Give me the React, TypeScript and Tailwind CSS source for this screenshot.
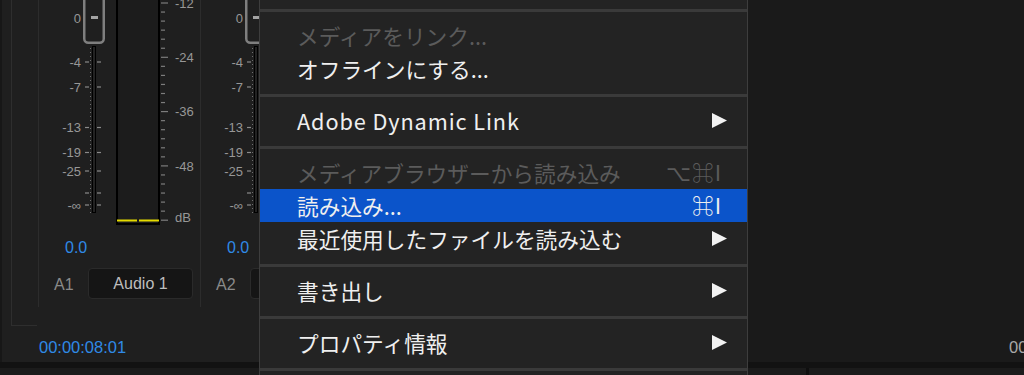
import React from "react";

const LABEL_FONT = "Liberation Sans, Arial, sans-serif";

function Meter({ partial }: { partial?: boolean }) {
  const left: [number, string][] = [
    [62, "-4"],
    [87, "-7"],
    [127.5, "-13"],
    [152.5, "-19"],
    [171, "-25"],
    [193, ""],
    [205, "-∞"],
  ];
  const right: { y: number; major: boolean }[] = [];
  for (let k = -1; k <= 24; k++) {
    right.push({ y: 3 + k * 9.05, major: k % 6 === 0 });
  }
  const rightLabels: [number, string][] = [
    [3, "-12"],
    [57.3, "-24"],
    [111.6, "-36"],
    [166, "-48"],
    [217.5, "dB"],
  ];
  return (
    <svg width={161} height={226} viewBox="1 0 161 226" className="block shrink-0">
      {/* fader knob */}
      <rect x={46.25} y={-12} width={19.5} height={54.75} rx={4} fill="none" stroke="#7f7f7f" strokeWidth={2.5} />
      <rect x={53} y={16} width={7} height={3} fill="#a3a3a3" />
      <text x={43} y={18} textAnchor="end" dominantBaseline="central" fontFamily={LABEL_FONT} fontSize={13} fill="#979797">
        0
      </text>
      {/* fader scale */}
      <line x1={52.5} y1={48} x2={52.5} y2={214} stroke="#6f6f6f" strokeWidth={1} strokeDasharray="1 3" />
      <rect x={54} y={46} width={4} height={167} fill="#000" />
      <rect x={55.2} y={47} width={1.6} height={165} fill="#2b2b2b" />
      {left.map(([y, t]) => (
        <g key={y}>
          <line x1={47} y1={y} x2={51} y2={y} stroke="#8a8a8a" strokeWidth={1.2} />
          <line x1={59} y1={y} x2={63} y2={y} stroke="#8a8a8a" strokeWidth={1.2} />
          {t && (
            <text x={43} y={y} textAnchor="end" dominantBaseline="central" fontFamily={LABEL_FONT} fontSize={13} fill="#979797">
              {t}
            </text>
          )}
        </g>
      ))}
      {!partial && (
        <g>
          {/* level meter */}
          <rect x={79} y={-12} width={42} height={236} fill="#1c1c1c" stroke="#000" strokeWidth={2} />
          <rect x={79} y={219.5} width={20} height={2} fill="#e3da00" />
          <rect x={101} y={219.5} width={20} height={2} fill="#e3da00" />
          {right.map((r) => (
            <line key={r.y} x1={123} y1={r.y} x2={r.major ? 130 : 127} y2={r.y} stroke="#7d7d7d" strokeWidth={1.2} />
          ))}
          {rightLabels.map(([y, t]) => (
            <text key={t} x={137} y={y} dominantBaseline="central" fontFamily={LABEL_FONT} fontSize={13} fill="#979797">
              {t}
            </text>
          ))}
        </g>
      )}
    </svg>
  );
}

function Strip({ id, name, partial }: { id: string; name: string; partial?: boolean }) {
  return (
    <div className="w-[162px] h-[307px] shrink-0 border-l border-[#2c2c2c] flex flex-col font-['Liberation_Sans',Arial,sans-serif]">
      <Meter partial={partial} />
      <div className="mt-[12px] h-[20px] leading-[20px] text-[16px] text-[#2f8ae6] pl-[26px]">0.0</div>
      <div className="mt-[10px] h-[31px] flex items-center">
        <span className="w-[49px] pl-[15px] text-[16px] text-[#8a8a8a] leading-[20px] pt-[3px]">{id}</span>
        <div className="w-[105px] h-[31px] rounded-[4px] bg-[#151515] border border-[#2a2a2a] flex items-center justify-center text-[16px] text-[#bdbdbd]">
          {name}
        </div>
      </div>
    </div>
  );
}

function Arrow() {
  return (
    <svg width={15} height={15} viewBox="0 0 15 15" className="shrink-0">
      <polygon points="0,0 15,7.5 0,15" fill="#f2f2f2" />
    </svg>
  );
}

function Item({
  label,
  disabled,
  shortcut,
  sub,
  active,
  latin,
}: {
  label: string;
  disabled?: boolean;
  shortcut?: string;
  sub?: boolean;
  active?: boolean;
  latin?: boolean;
}) {
  const color = disabled ? "text-[#5b5b5b]" : "text-[#efefef]";
  return (
    <div className={`h-[33px] flex items-center pl-[37px] pr-[20px] ${active ? "bg-[#0b54ca]" : ""}`}>
      <span className={`flex-1 whitespace-nowrap leading-[33px] ${latin ? "tracking-[0.9px]" : ""} ${color}`}>{label}</span>
      {shortcut && (
        <span className={`mr-[5px] whitespace-nowrap tracking-[1px] font-['Noto_Sans_CJK_JP','DejaVu_Sans',sans-serif] ${color}`}>
          {shortcut}
        </span>
      )}
      {sub && <Arrow />}
    </div>
  );
}

function Sep() {
  return <div className="h-[3px] bg-[#3a3a3a] shrink-0" />;
}

function Group({ children }: { children: React.ReactNode }) {
  return <div className="pt-[7px] pb-[9px] shrink-0">{children}</div>;
}

export default function App() {
  return (
    <div className="relative w-[1024px] h-[375px] overflow-hidden bg-[#1e1e1e] flex flex-col">
      <div className="h-[362px] flex shrink-0">
        {/* audio mixer (visible part, left of the menu) */}
        <div className="w-[259px] shrink-0 overflow-hidden bg-[#1f1f1f] border-l-[2px] border-[#171717] flex flex-col">
          <div className="h-[326px] flex items-start shrink-0">
            <div className="w-[36px] h-[326px] pl-[9px] shrink-0">
              <div className="w-[26px] h-full border-l border-b border-[#2e2e2e]" />
            </div>
            <Strip id="A1" name="Audio 1" />
            <Strip id="A2" name="" partial />
          </div>
          <div className="h-[36px] pt-[11px] pl-[37px] whitespace-nowrap text-[16.5px] leading-[20px] text-[#2f8ae6] font-['Liberation_Sans',Arial,sans-serif]">
            00:00:08:01
          </div>
        </div>
        {/* area under the menu */}
        <div className="w-[489px] shrink-0 bg-[#1f1f1f]" />
        {/* program panel */}
        <div className="flex-1 bg-[#1a1a1a] flex flex-col">
          <div className="flex-1" />
          <div className="h-[36px] pt-[11px] pl-[261px] whitespace-nowrap overflow-hidden text-[16.5px] leading-[20px] text-[#a8a8a8] font-['Liberation_Sans',Arial,sans-serif]">
            00
          </div>
        </div>
      </div>
      <div className="h-[6px] bg-[#121212] shrink-0" />
      <div className="h-[7px] bg-[#1b1b1b] shrink-0 flex">
        <div className="w-[806px]" />
        <div className="w-[3px] bg-[#0f0f0f]" />
      </div>

      {/* context menu */}
      <div className="absolute top-0 left-[259px] w-[489px] h-[375px] bg-[#232323] border-x border-[#3d3d3d] flex flex-col text-[21.7px] font-['Noto_Sans_CJK_JP','Noto_Sans',sans-serif]">
        <div className="h-[9px] shrink-0" />
        <Sep />
        <Group>
          <Item label="メディアをリンク..." disabled />
          <Item label="オフラインにする..." />
        </Group>
        <Sep />
        <Group>
          <Item label="Adobe Dynamic Link" sub latin />
        </Group>
        <Sep />
        <Group>
          <Item label="メディアブラウザーから読み込み" disabled shortcut="⌥⌘I" />
          <Item label="読み込み..." shortcut="⌘I" active />
          <Item label="最近使用したファイルを読み込む" sub />
        </Group>
        <Sep />
        <Group>
          <Item label="書き出し" sub />
        </Group>
        <Sep />
        <Group>
          <Item label="プロパティ情報" sub />
        </Group>
        <Sep />
      </div>
    </div>
  );
}
